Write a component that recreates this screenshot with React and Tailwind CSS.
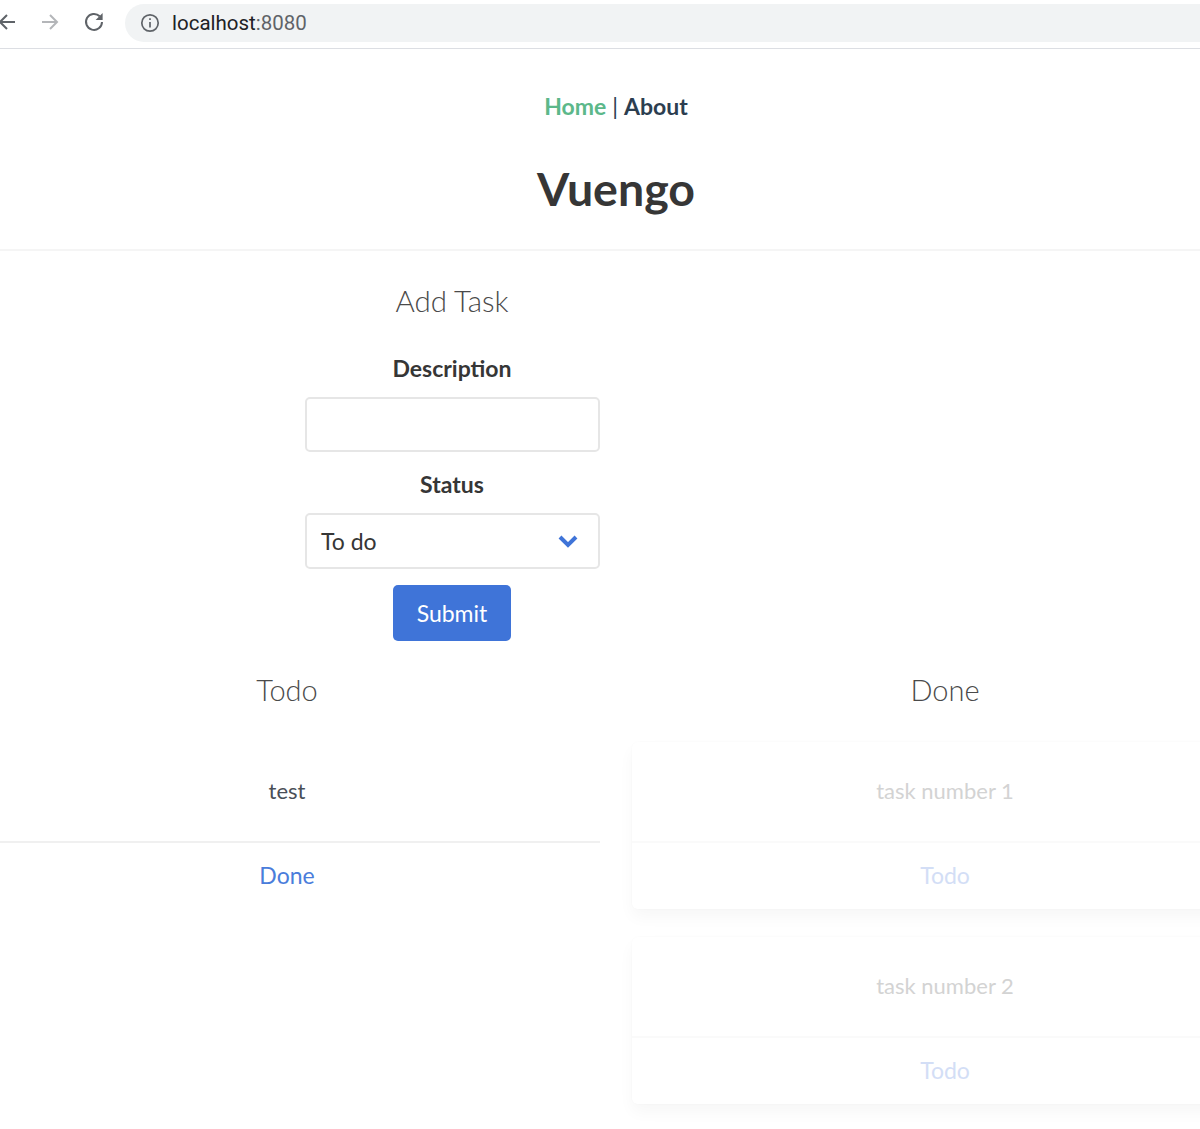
import React from "react";

const Task = ({ title, action, faded }) => (
  <div className={faded ? "rounded-md bg-white shadow-[0_8px_16px_rgba(10,10,10,0.035),0_0_0_1px_rgba(10,10,10,0.006)] h-[167px]" : "h-[167px]"}>
    <div className={`flex h-[101px] items-center justify-center border-b-2 pb-[2px] text-[22px] ${faded ? "border-[#fafafa] text-[#d3d3d3]" : "border-[#f0f0f0] text-[#4a4f57]"}`}>
      {title}
    </div>
    <div className={`flex h-[66px] items-center justify-center pb-[2px] text-[23px] ${faded ? "text-[#d3def6]" : "text-[#4a7ddb]"}`}>
      {action}
    </div>
  </div>
);

export default function App() {
  return (
    <div className="h-[1129px] w-[1200px] overflow-hidden bg-white font-['Lato','Noto_Sans',sans-serif] text-[#363636]">
      <div className="flex h-[49px] items-center border-b border-[#dcdee3] pb-[2px]">
        <svg className="-ml-[5px] mb-[2px] h-[24px] w-[24px]" viewBox="0 0 24 24" fill="none" stroke="#5f6368" strokeWidth="2">
          <path d="M20 12H5M12 5l-7 7 7 7" />
        </svg>
        <svg className="mb-[2px] ml-[19px] h-[24px] w-[24px]" viewBox="0 0 24 24" fill="none" stroke="#b4b6b9" strokeWidth="2">
          <path d="M4 12h15M12 5l7 7-7 7" />
        </svg>
        <svg className="mb-[2px] ml-[20px] h-[24px] w-[24px]" viewBox="0 0 24 24" fill="none" stroke="#5f6368" strokeWidth="2">
          <path d="M20 12a8 8 0 1 1-2.3-5.7" />
          <path d="M20.6 3v7h-7z" fill="#5f6368" stroke="none" />
        </svg>
        <div className="ml-[19px] flex h-[38px] flex-1 items-center rounded-l-[19px] bg-[#f1f3f4] pl-[15px]">
          <svg className="h-[20px] w-[20px]" viewBox="0 0 20 20" fill="none" stroke="#5f6368" strokeWidth="1.7">
            <circle cx="10" cy="10" r="8.2" />
            <path d="M10 9v5.5" />
            <path d="M10 5.2v1.9" />
          </svg>
          <span className="ml-[12px] font-['Roboto',sans-serif] text-[20.5px] text-[#202124]">
            localhost<span className="text-[#5f6368]">:8080</span>
          </span>
        </div>
      </div>

      <div className="w-[1232px]">
        <nav className="mt-[28px] flex h-[40px] items-center justify-center pt-[18px] text-[23px] font-bold leading-none">
          <span className="text-[#5cb88a]">Home</span>
          <span className="mx-[6px] font-normal text-[#2c3e50]">|</span>
          <span className="text-[#2c3e50]">About</span>
        </nav>
        <h1 className="mt-[43px] text-center text-[46.5px] font-bold leading-[56px] text-[#363636]">Vuengo</h1>
        <hr className="mt-[33px] h-[2px] border-0 bg-[#f5f5f5]" />

        <section className="ml-[305px] w-[295px] pt-[33px] text-center">
          <h2 className="pr-[1px] text-[29.5px] font-light leading-[34px] text-[#4a4a4a]">Add Task</h2>
          <label className="mt-[35px] block pr-[1px] text-[23px] font-bold leading-[30px] text-[#363636]">Description</label>
          <input className="mt-[14px] block h-[55px] w-full rounded-[5px] border-2 border-[#e6e6e6] bg-white" />
          <label className="mt-[17px] block pr-[1px] text-[23px] font-bold leading-[30px] text-[#363636]">Status</label>
          <div className="mt-[14px] flex h-[56px] items-center justify-between rounded-[5px] border-2 border-[#e6e6e6] pl-[14px] pr-[20px] text-[23px] text-[#363636]">
            <span>To do</span>
            <svg className="h-[14px] w-[20px]" viewBox="0 0 20 14" fill="none" stroke="#3f74d8" strokeWidth="4">
              <path d="M2 3l8 8 8-8" />
            </svg>
          </div>
          <button className="ml-[88px] mt-[16px] flex h-[56px] w-[118px] items-center justify-center rounded-[5px] bg-[#3f74d8] text-[23px] text-white">
            Submit
          </button>
        </section>

        <div className="-mx-[26px] mt-[31px] grid grid-cols-2 gap-[32px]">
          <div>
            <h2 className="text-center text-[29px] font-light leading-[36px] text-[#4a4a4a]">Todo</h2>
            <div className="mt-[34px]">
              <Task title="test" action="Done" />
            </div>
          </div>
          <div>
            <h2 className="text-center text-[29px] font-light leading-[36px] text-[#4a4a4a]">Done</h2>
            <div className="mt-[34px] flex flex-col gap-[28px]">
              <Task faded title="task number 1" action="Todo" />
              <Task faded title="task number 2" action="Todo" />
            </div>
          </div>
        </div>
      </div>
    </div>
  );
}
